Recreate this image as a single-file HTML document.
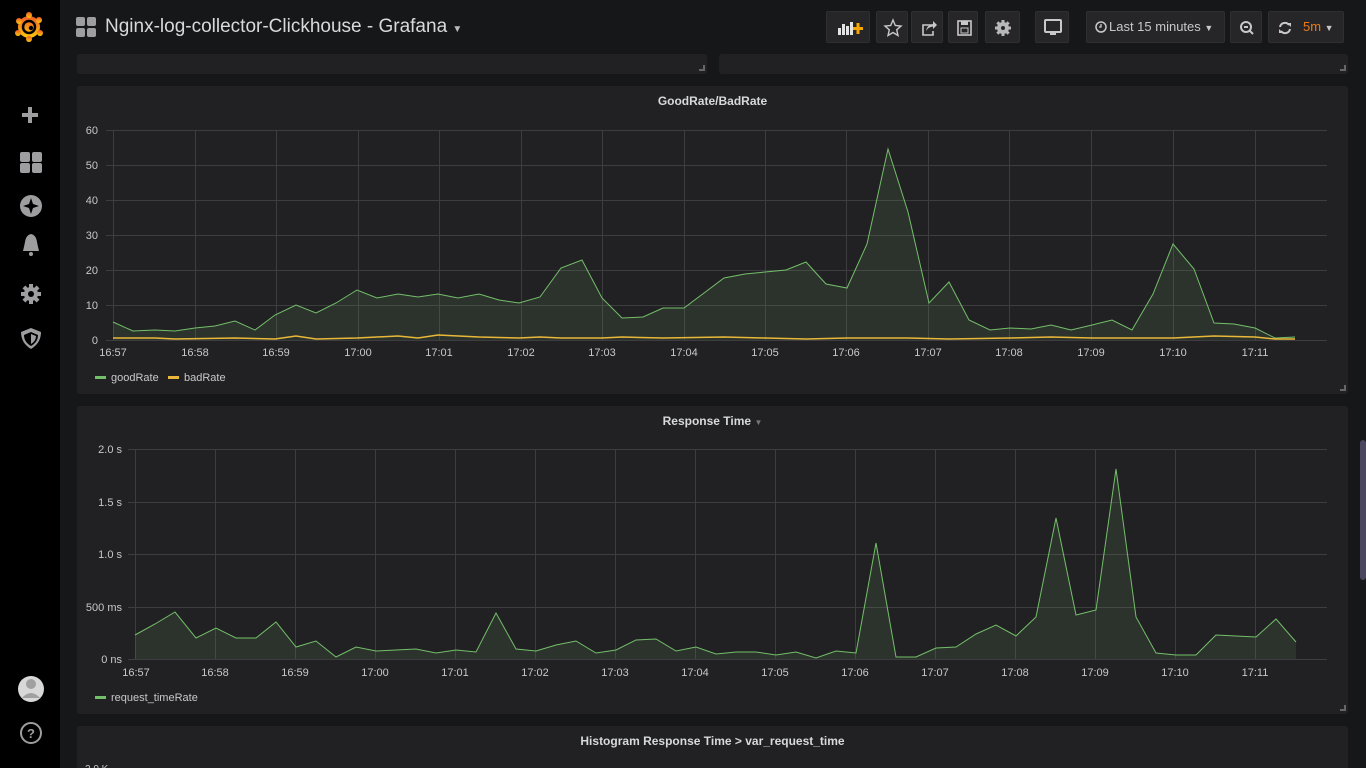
<!DOCTYPE html>
<html><head><meta charset="utf-8"><style>
*{margin:0;padding:0;box-sizing:border-box}
html,body{width:1366px;height:768px;overflow:hidden}
body{background:#161719;font-family:"Liberation Sans",sans-serif;position:relative;color:#d8d9da}
.side{position:absolute;left:0;top:0;width:60px;height:768px;background:#000}
.p{position:absolute;background:#212124;border-radius:3px}
.btn{position:absolute;top:11px;height:32px;background:#262628;border:1px solid #2f2f32;border-radius:2px}
.t{position:absolute;font-size:12px;font-weight:bold;color:#d8d9da;text-align:center}
svg text{font-family:"Liberation Sans",sans-serif}
</style></head><body>
<div class="side">
<svg width="60" height="768" viewBox="0 0 60 768">
<defs><linearGradient id="g" x1="0" y1="1" x2="0" y2="0"><stop offset="0" stop-color="#fbca0a"/><stop offset="1" stop-color="#f05a28"/></linearGradient></defs>
<circle cx="29" cy="27" r="11" fill="url(#g)"/>
<g fill="url(#g)"><circle cx="29" cy="15" r="3"/><circle cx="39" cy="20" r="3"/><circle cx="19" cy="21" r="3"/><circle cx="40" cy="33" r="3"/><circle cx="18" cy="33" r="3"/><circle cx="29" cy="39" r="3"/></g>
<circle cx="29" cy="27" r="6" fill="none" stroke="#000" stroke-width="2.5"/>
<circle cx="31" cy="28" r="2.2" fill="#000"/>
<g fill="#9e9ea0">
<rect x="22" y="113" width="16" height="4"/><rect x="28" y="107" width="4" height="16"/>
<rect x="20" y="152" width="10" height="10" rx="2"/><rect x="32" y="152" width="10" height="10" rx="2"/><rect x="20" y="163" width="10" height="10" rx="2"/><rect x="32" y="163" width="10" height="10" rx="2"/>
<circle cx="31" cy="206" r="11"/>
<path d="M23 251 Q24 247 25 242 Q26 235 31 234 Q36 235 37 242 Q38 247 39 251 Z"/><circle cx="31" cy="254" r="2"/>
<circle cx="31" cy="294" r="7"/>
<path d="M31 328 L41 332 Q41 343 31 349 Q21 343 21 332 Z"/>
<circle cx="31" cy="689" r="13" fill="#d8d8d8"/>
</g>
<path d="M31 198 L33 204 L39 206 L33 208 L31 214 L29 208 L23 206 L29 204 Z" fill="#000"/>
<g fill="#9e9ea0"><rect x="29" y="284" width="4" height="20"/><rect x="21" y="292" width="20" height="4"/><rect x="29" y="284" width="4" height="20" transform="rotate(45 31 294)"/><rect x="29" y="284" width="4" height="20" transform="rotate(-45 31 294)"/></g>
<circle cx="31" cy="294" r="3" fill="#000"/>
<path d="M31 332 L38 335 Q38 342 31 346 Q24 342 24 335 Z" fill="#000"/><path d="M31 334 L36 336 Q36 341 31 344 Z" fill="#9e9ea0"/>
<circle cx="31" cy="684" r="5" fill="#a0a0a0"/><path d="M22 698 Q31 688 40 698" fill="#a0a0a0"/>
<circle cx="31" cy="733" r="10" fill="none" stroke="#9e9ea0" stroke-width="2"/>
<text x="31" y="738" font-size="13" font-weight="bold" fill="#9e9ea0" text-anchor="middle">?</text>
</svg></div>

<svg style="position:absolute;left:76px;top:17px" width="20" height="20"><g fill="#9e9ea0"><rect x="0" y="0" width="9" height="9" rx="2"/><rect x="11" y="0" width="9" height="9" rx="2"/><rect x="0" y="11" width="9" height="9" rx="2"/><rect x="11" y="11" width="9" height="9" rx="2"/></g></svg>
<div style="position:absolute;left:105px;top:16px;font-size:19px;color:#d8d9da">Nginx-log-collector-Clickhouse - Grafana <span style="font-size:10px;color:#bbb">▼</span></div>

<div class="btn" style="left:826px;width:44px"><svg width="44" height="32"><g fill="#e3e3e3"><rect x="11" y="16" width="3" height="7"/><rect x="15" y="12" width="3" height="11"/><rect x="19" y="14" width="3" height="9"/><rect x="23" y="10" width="3" height="13"/></g><rect x="26" y="15" width="10" height="3" fill="#f7a600"/><rect x="29.5" y="11" width="3" height="11" fill="#f7a600"/></svg></div>
<div class="btn" style="left:876px;width:32px"><svg width="32" height="32"><path d="M16 8 L18.3 13.5 L24 14 L19.7 17.8 L21 23.5 L16 20.5 L11 23.5 L12.3 17.8 L8 14 L13.7 13.5Z" fill="none" stroke="#c8c8c8" stroke-width="1.4"/></svg></div>
<div class="btn" style="left:911px;width:32px"><svg width="32" height="32"><path d="M20 13 H11 V23 H21 V19" fill="none" stroke="#c8c8c8" stroke-width="1.6"/><path d="M14 19 Q15 13 21 12 V9 L25 13 L21 17 V14.5 Q16 15 14 19Z" fill="#c8c8c8"/></svg></div>
<div class="btn" style="left:948px;width:30px"><svg width="30" height="32"><rect x="9" y="9" width="13" height="14" fill="none" stroke="#c8c8c8" stroke-width="1.6"/><rect x="12" y="9" width="7" height="4" fill="#c8c8c8"/><rect x="12" y="16" width="7" height="5" fill="none" stroke="#c8c8c8"/></svg></div>
<div class="btn" style="left:985px;width:35px"><svg width="35" height="32"><g fill="#b8b8b8"><circle cx="17" cy="16" r="6"/><rect x="15.5" y="8" width="3" height="16"/><rect x="9" y="14.5" width="16" height="3"/><rect x="15.5" y="8" width="3" height="16" transform="rotate(45 17 16)"/><rect x="15.5" y="8" width="3" height="16" transform="rotate(-45 17 16)"/></g><circle cx="17" cy="16" r="2" fill="#262628"/></svg></div>
<div class="btn" style="left:1035px;width:34px"><svg width="34" height="32"><rect x="9" y="8" width="16" height="12" rx="1" fill="none" stroke="#c8c8c8" stroke-width="2"/><rect x="14" y="21" width="6" height="2" fill="#c8c8c8"/></svg></div>
<div class="btn" style="left:1086px;width:139px;font-size:13px;color:#c8c8c8;line-height:30px;padding-left:22px"><svg style="position:absolute;left:8px;top:9px" width="12" height="12"><circle cx="6" cy="6" r="5" fill="none" stroke="#c8c8c8" stroke-width="1.5"/><path d="M6 3V6H4" stroke="#c8c8c8" fill="none" stroke-width="1.3"/></svg>Last 15 minutes <span style="font-size:9px">▼</span></div>
<div class="btn" style="left:1230px;width:32px"><svg width="32" height="32"><circle cx="15" cy="15" r="5" fill="none" stroke="#c8c8c8" stroke-width="2"/><path d="M13 15H17M19 19L22 22" stroke="#c8c8c8" stroke-width="2"/></svg></div>
<div class="btn" style="left:1268px;width:76px;font-size:13px;color:#eb7b18;line-height:30px"><svg style="position:absolute;left:8px;top:8px" width="16" height="16"><path d="M3 7A5 5 0 0 1 12 5M13 9A5 5 0 0 1 4 11" fill="none" stroke="#c8c8c8" stroke-width="2"/><path d="M10 3H14V7Z M6 13H2V9Z" fill="#c8c8c8"/></svg><span style="position:absolute;left:34px">5m <span style="font-size:9px;color:#c8c8c8">▼</span></span></div>

<div class="p" style="left:77px;top:54px;width:630px;height:20px"></div>
<div class="p" style="left:719px;top:54px;width:629px;height:20px"></div>
<div class="p" style="left:77px;top:86px;width:1271px;height:308px"></div>
<div class="p" style="left:77px;top:406px;width:1271px;height:308px"></div>
<div class="p" style="left:77px;top:726px;width:1271px;height:42px;border-radius:3px 3px 0 0"></div>
<div style="position:absolute;left:1360px;top:440px;width:6px;height:140px;background:#4a475e;border-radius:3px"></div>

<div class="t" style="left:77px;width:1271px;top:94px">GoodRate/BadRate</div>
<div class="t" style="left:77px;width:1271px;top:414px">Response Time <span style="font-size:8px;color:#777">▼</span></div>
<div class="t" style="left:77px;width:1271px;top:734px">Histogram Response Time &gt; var_request_time</div>

<svg style="position:absolute;left:0;top:0" width="1366" height="768">
<g stroke="#3d3d40" stroke-width="1">
<path d="M106 130.5H1327M106 165.5H1327M106 200.5H1327M106 235.5H1327M106 270.5H1327M106 305.5H1327M106 340.5H1327"/>
<path d="M113.5 130V340M195.5 130V340M276.5 130V340M358.5 130V340M439.5 130V340M521.5 130V340M602.5 130V340M684.5 130V340M765.5 130V340M846.5 130V340M928.5 130V340M1009.5 130V340M1091.5 130V340M1173.5 130V340M1255.5 130V340"/>
<path d="M128 449.5H1327M128 502.5H1327M128 554.5H1327M128 607.5H1327M128 659.5H1327"/>
<path d="M135.5 449V659M215.5 449V659M295.5 449V659M375.5 449V659M455.5 449V659M535.5 449V659M615.5 449V659M695.5 449V659M775.5 449V659M855.5 449V659M935.5 449V659M1015.5 449V659M1095.5 449V659M1175.5 449V659M1255.5 449V659"/>
</g>
<g font-size="11" fill="#c8c8c8" text-anchor="end">
<text x="98" y="134">60</text><text x="98" y="169">50</text><text x="98" y="204">40</text><text x="98" y="239">30</text><text x="98" y="274">20</text><text x="98" y="309">10</text><text x="98" y="344">0</text>
<text x="122" y="453">2.0 s</text><text x="122" y="506">1.5 s</text><text x="122" y="558">1.0 s</text><text x="122" y="611">500 ms</text><text x="122" y="663">0 ns</text>
</g>
<g font-size="11" fill="#c8c8c8" text-anchor="middle">
<text x="113" y="356">16:57</text><text x="195" y="356">16:58</text><text x="276" y="356">16:59</text><text x="358" y="356">17:00</text><text x="439" y="356">17:01</text><text x="521" y="356">17:02</text><text x="602" y="356">17:03</text><text x="684" y="356">17:04</text><text x="765" y="356">17:05</text><text x="846" y="356">17:06</text><text x="928" y="356">17:07</text><text x="1009" y="356">17:08</text><text x="1091" y="356">17:09</text><text x="1173" y="356">17:10</text><text x="1255" y="356">17:11</text>
<text x="136" y="676">16:57</text><text x="215" y="676">16:58</text><text x="295" y="676">16:59</text><text x="375" y="676">17:00</text><text x="455" y="676">17:01</text><text x="535" y="676">17:02</text><text x="615" y="676">17:03</text><text x="695" y="676">17:04</text><text x="775" y="676">17:05</text><text x="855" y="676">17:06</text><text x="935" y="676">17:07</text><text x="1015" y="676">17:08</text><text x="1095" y="676">17:09</text><text x="1175" y="676">17:10</text><text x="1255" y="676">17:11</text>
</g>
<path d="M113 322 L133 331 155 330 175 331 195 328 215 326 235 321 255 330 275 315 296 305 316 313 336 303 357 290 377 298 398 294 418 297 438 294 458 298 479 294 499 300 519 303 540 297 561 268 582 260 602 298 622 318 643 317 663 308 684 308 704 293 724 278 745 274 765 272 786 270 806 262 826 284 847 288 867 244 888 149 908 212 929 303 949 282 969 320 990 330 1010 328 1031 329 1051 325 1071 330 1092 325 1112 320 1132 330 1153 294 1173 244 1194 269 1214 323 1234 324 1255 328 1275 338 1295 337 L1295 340 L113 340Z" fill="rgba(126,178,109,0.12)" stroke="none"/>
<path d="M113 322 L133 331 155 330 175 331 195 328 215 326 235 321 255 330 275 315 296 305 316 313 336 303 357 290 377 298 398 294 418 297 438 294 458 298 479 294 499 300 519 303 540 297 561 268 582 260 602 298 622 318 643 317 663 308 684 308 704 293 724 278 745 274 765 272 786 270 806 262 826 284 847 288 867 244 888 149 908 212 929 303 949 282 969 320 990 330 1010 328 1031 329 1051 325 1071 330 1092 325 1112 320 1132 330 1153 294 1173 244 1194 269 1214 323 1234 324 1255 328 1275 338 1295 337" fill="none" stroke="#73bf69" stroke-width="1"/>
<path d="M113 338 L155 338 175 339 235 338 275 339 296 336 316 339 357 338 398 336 418 338 438 335 479 337 519 338 540 337 561 338 602 338 622 337 663 338 724 337 765 338 806 339 847 338 908 338 949 339 1010 338 1051 337 1092 338 1132 338 1173 338 1214 336 1255 337 1275 339 1295 339" fill="none" stroke="#eab839" stroke-width="1.5"/>
<path d="M135 635 L155 624 175 612 196 638 216 628 236 638 256 638 276 622 296 647 316 641 336 657 356 647 376 651 396 650 416 649 436 653 456 650 476 652 496 613 516 649 536 651 556 645 576 641 596 653 616 650 636 640 656 639 676 651 696 647 716 654 736 652 756 652 776 655 796 652 816 658 836 651 856 653 876 543 896 657 916 657 936 648 956 647 976 634 996 625 1016 636 1036 617 1056 518 1076 615 1096 610 1116 469 1136 617 1156 653 1176 655 1196 655 1216 635 1236 636 1256 637 1276 619 1296 642 L1296 659 L135 659Z" fill="rgba(126,178,109,0.12)"/>
<path d="M135 635 L155 624 175 612 196 638 216 628 236 638 256 638 276 622 296 647 316 641 336 657 356 647 376 651 396 650 416 649 436 653 456 650 476 652 496 613 516 649 536 651 556 645 576 641 596 653 616 650 636 640 656 639 676 651 696 647 716 654 736 652 756 652 776 655 796 652 816 658 836 651 856 653 876 543 896 657 916 657 936 648 956 647 976 634 996 625 1016 636 1036 617 1056 518 1076 615 1096 610 1116 469 1136 617 1156 653 1176 655 1196 655 1216 635 1236 636 1256 637 1276 619 1296 642" fill="none" stroke="#73bf69" stroke-width="1"/>
<rect x="95" y="376" width="11" height="3" fill="#73bf69"/><text x="111" y="381" font-size="11" fill="#c8c8c8">goodRate</text>
<rect x="168" y="376" width="11" height="3" fill="#eab839"/><text x="184" y="381" font-size="11" fill="#c8c8c8">badRate</text>
<rect x="95" y="696" width="11" height="3" fill="#73bf69"/><text x="111" y="701" font-size="11" fill="#c8c8c8">request_timeRate</text>
<g fill="#666"><path d="M699 71H705V65H703V69H699Z"/><path d="M1340 71H1346V65H1344V69H1340Z"/><path d="M1340 391H1346V385H1344V389H1340Z"/><path d="M1340 711H1346V705H1344V709H1340Z"/></g>
<text x="85" y="772" font-size="10" fill="#c8c8c8">2.0 K</text>
</svg>
</body></html>
